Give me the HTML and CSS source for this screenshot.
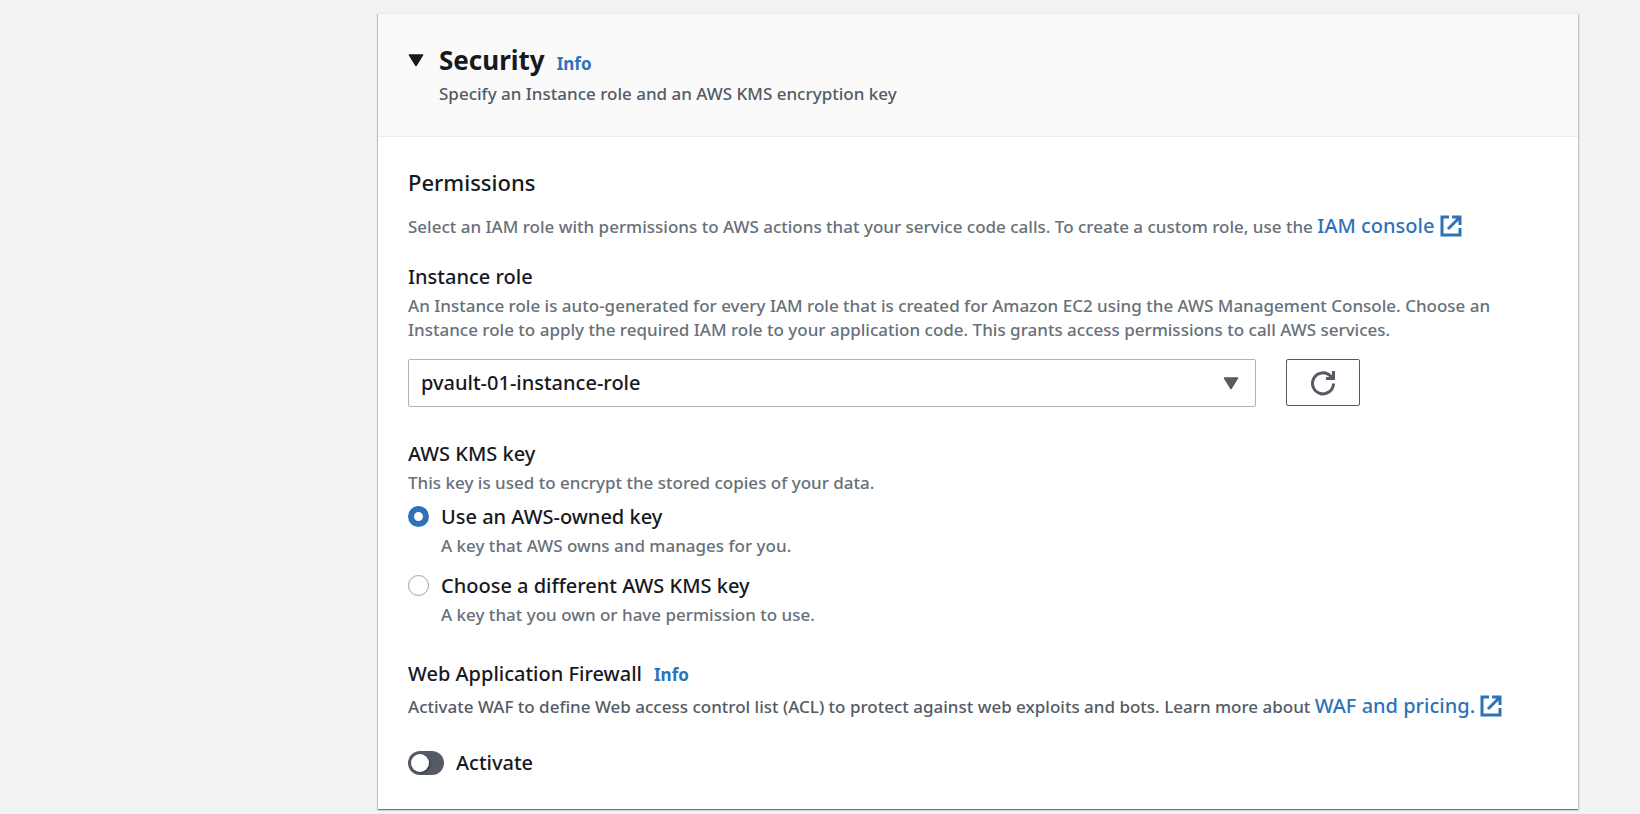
FILE: index.html
```html
<!DOCTYPE html>
<html lang="en">
<head>
<meta charset="utf-8">
<meta name="viewport" content="width=device-width, initial-scale=1">
<title>Security</title>
<link rel="stylesheet" href="styles.css">
</head>
<body>
<svg class="defs" aria-hidden="true">
  <symbol id="external" viewBox="0 0 22 22">
    <path d="M9 2H2v18h18v-7M12 2h8v8M19.500 2.500 8 14" fill="none" stroke="currentColor" stroke-width="3"/>
  </symbol>
</svg>
<main class="page">
  <section class="card">
    <header class="card-header">
      <button class="toggle-section" type="button" aria-label="Collapse Security" aria-expanded="true">
        <svg class="caret" viewBox="0 0 16 13" aria-hidden="true"><path d="M1.500 1h13L8 11.500z" fill="currentColor" stroke="currentColor" stroke-width="1.500" stroke-linejoin="round"/></svg>
      </button>
      <div class="heading">
        <div class="title-row">
          <h2 class="title">Security</h2>
          <a class="info" href="#">Info</a>
        </div>
        <p class="subtitle">Specify an Instance role and an AWS KMS encryption key</p>
      </div>
    </header>
    <div class="card-body">
      <h3 class="section-title">Permissions</h3>
      <p class="intro">Select an IAM role with permissions to AWS actions that your service code calls. To create a custom role, use the <a class="link" href="#">IAM console <svg class="external" aria-hidden="true"><use href="#external"/></svg></a></p>

      <div class="field">
        <label class="label" for="role">Instance role</label>
        <p class="hint">An Instance role is auto-generated for every IAM role that is created for Amazon EC2 using the AWS Management Console. Choose an Instance role to apply the required IAM role to your application code. This grants access permissions to call AWS services.</p>
        <div class="role-grid">
          <div class="select-wrap">
            <select class="select" id="role"><option>pvault-01-instance-role</option></select>
            <svg class="caret select-caret" viewBox="0 0 16 13" aria-hidden="true"><path d="M1.500 1h13L8 11.500z" fill="currentColor" stroke="currentColor" stroke-width="1.500" stroke-linejoin="round"/></svg>
          </div>
          <button class="refresh" type="button" aria-label="Refresh roles">
            <svg class="refresh-icon" viewBox="0 0 26 26" aria-hidden="true"><path d="M23.500 13.500A10.500 10.500 0 1 1 20.500 6L23 8.500M16 8.500h7.500V1" fill="none" stroke="currentColor" stroke-width="3"/></svg>
          </button>
        </div>
      </div>

      <fieldset class="field kms">
        <legend class="label">AWS KMS key</legend>
        <p class="hint">This key is used to encrypt the stored copies of your data.</p>
        <div class="options">
          <div class="option">
            <input class="radio" type="radio" name="kms" id="kms-owned" checked>
            <div>
              <label class="label" for="kms-owned">Use an AWS-owned key</label>
              <p class="hint">A key that AWS owns and manages for you.</p>
            </div>
          </div>
          <div class="option">
            <input class="radio" type="radio" name="kms" id="kms-other">
            <div>
              <label class="label" for="kms-other">Choose a different AWS KMS key</label>
              <p class="hint">A key that you own or have permission to use.</p>
            </div>
          </div>
        </div>
      </fieldset>

      <div class="field waf">
        <div class="title-row">
          <h4 class="label">Web Application Firewall</h4>
          <a class="info" href="#">Info</a>
        </div>
        <p class="waf-text">Activate WAF to define Web access control list (ACL) to protect against web exploits and bots. Learn more about <a class="link" href="#">WAF and pricing. <svg class="external" aria-hidden="true"><use href="#external"/></svg></a></p>
        <div class="switch-row">
          <input class="switch" type="checkbox" role="switch" id="activate">
          <label class="label" for="activate">Activate</label>
        </div>
      </div>
    </div>
  </section>
</main>
</body>
</html>
```
FILE: styles.css
```css
* { box-sizing: border-box; }

body {
  margin: 0;
  background: #f2f3f3;
  color: #16191f;
  font-family: "Noto Sans", "Open Sans", sans-serif;
  font-size: 17px;
  font-weight: 500;
  line-height: 24px;
}

h2, h3, h4, p { margin: 0; }

.defs { display: none; }

.page { padding: 13px 62px 5px 378px; }

.card {
  background: #fff;
  border-top: 1px solid #eaeded;
  box-shadow: 0 1px 1px rgba(0, 28, 36, 0.4), 1px 1px 2px rgba(0, 28, 36, 0.2), -1px 1px 1px rgba(0, 28, 36, 0.15);
}

.card-header {
  display: flex;
  gap: 15px;
  padding: 28px 30px 30px;
  background: #fafafa;
  border-bottom: 1px solid #eaeded;
}

.toggle-section {
  display: flex;
  align-items: center;
  height: 36px;
  padding: 0;
  border: 0;
  background: none;
  color: #16191f;
}

.caret {
  display: block;
  width: 16px;
  height: 13px;
}

.title-row {
  display: flex;
  align-items: baseline;
  gap: 12px;
}

.title {
  font-size: 26px;
  font-weight: 700;
  line-height: 36px;
}

.info {
  color: #2e73b8;
  font-weight: 700;
  text-decoration: none;
}

.subtitle {
  margin-top: 4px;
  color: #545b64;
}

.card-body { padding: 29px 30px 32px; }

.section-title {
  font-size: 22px;
  font-weight: 500;
  line-height: 32px;
}

.intro {
  margin-top: 14px;
  color: #687078;
  line-height: 28px;
}

.link {
  color: #2e73b8;
  font-size: 20px;
  text-decoration: none;
  white-space: nowrap;
}

.external {
  width: 22px;
  height: 22px;
  vertical-align: -4px;
}

.field {
  margin: 22px 0 0;
  padding: 0;
  border: 0;
}

.label {
  display: block;
  padding: 0;
  font-size: 20px;
  font-weight: 500;
  line-height: 28px;
}

.hint {
  margin-top: 3px;
  color: #687078;
}

.role-grid {
  display: grid;
  grid-template-columns: repeat(4, 1fr);
  gap: 30px;
  margin-top: 17px;
}

.select-wrap {
  position: relative;
  grid-column: span 3;
}

.select {
  width: 100%;
  height: 48px;
  padding: 0 48px 0 12px;
  appearance: none;
  background: #fff;
  border: 1px solid #aab7b8;
  border-radius: 2px;
  color: #16191f;
  font: inherit;
  font-size: 20px;
}

.select-caret {
  position: absolute;
  top: 18px;
  right: 17px;
  color: #545b64;
  pointer-events: none;
}

.refresh {
  display: flex;
  align-items: center;
  justify-content: center;
  justify-self: start;
  width: 74px;
  height: 47px;
  padding: 0;
  background: #fff;
  border: 1px solid #545b64;
  border-radius: 2px;
  color: #545b64;
}

.refresh-icon {
  width: 26px;
  height: 26px;
}

.kms, .waf { margin-top: 33px; }

.options {
  display: grid;
  gap: 14px;
  margin-top: 8px;
}

.option {
  display: flex;
  gap: 12px;
}

.radio {
  flex: none;
  width: 21px;
  height: 21px;
  margin: 3px 0;
  appearance: none;
  background: #fff;
  border: 1px solid #95a5a6;
  border-radius: 50%;
}

.radio:checked { border: 6px solid #2e73b8; }

.waf-text {
  margin-top: 4px;
  color: #545b64;
  line-height: 28px;
}

.switch-row {
  display: flex;
  align-items: center;
  gap: 12px;
  margin-top: 28px;
}

.switch {
  display: flex;
  align-items: center;
  width: 36px;
  height: 24px;
  margin: 0;
  padding: 0 3px;
  appearance: none;
  background: #545b64;
  border-radius: 12px;
}

.switch::before {
  content: "";
  width: 18px;
  height: 18px;
  background: #fff;
  border-radius: 50%;
  box-shadow: 1px 1px 2px rgba(0, 0, 0, 0.4);
}

.switch:checked { justify-content: flex-end; background: #2e73b8; }
```
